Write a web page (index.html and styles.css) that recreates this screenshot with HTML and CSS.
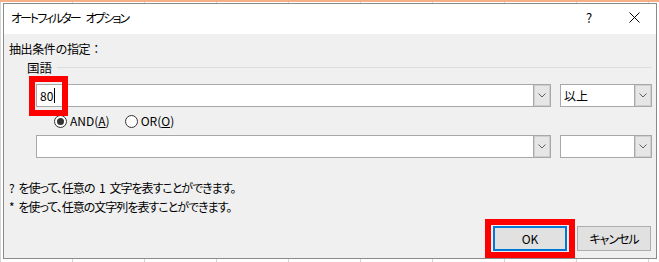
FILE: index.html
```html
<!DOCTYPE html>
<html lang="ja">
<head>
<meta charset="utf-8">
<link rel="stylesheet" href="styles.css">
</head>
<body>
<div class="sheet">
  <div class="dialog">
    <div class="titlebar">
      <span class="title">オートフィルター オプション</span>
      <span class="help">?</span>
      <span class="close"><svg width="11" height="11" viewBox="0 0 11 11"><path d="M0.5 0.5 L10.5 10.5 M10.5 0.5 L0.5 10.5" stroke="#000" stroke-width="1" fill="none"/></svg></span>
    </div>
    <div class="body">
      <div class="criteria">抽出条件の指定：</div>
      <div class="group">
        <div class="legend"><span class="legend-text">国語</span><span class="rule"></span></div>
        <div class="row">
          <div class="combo combo-value">
            <span class="text">80</span><span class="caret"></span>
            <span class="dd"><svg width="8" height="5" viewBox="0 0 8 5"><path d="M0.5 0.5 L4 4 L7.5 0.5" stroke="#606060" fill="none"/></svg></span>
            <span class="mark mark-input"></span>
          </div>
          <div class="combo combo-op">
            <span class="text">以上</span>
            <span class="dd"><svg width="8" height="5" viewBox="0 0 8 5"><path d="M0.5 0.5 L4 4 L7.5 0.5" stroke="#606060" fill="none"/></svg></span>
          </div>
        </div>
        <div class="radios">
          <label class="radio"><span class="circle checked"></span><span>AND(<u>A</u>)</span></label>
          <label class="radio"><span class="circle"></span><span>OR(<u>O</u>)</span></label>
        </div>
        <div class="row row2">
          <div class="combo combo-value">
            <span class="text"></span>
            <span class="dd"><svg width="8" height="5" viewBox="0 0 8 5"><path d="M0.5 0.5 L4 4 L7.5 0.5" stroke="#606060" fill="none"/></svg></span>
          </div>
          <div class="combo combo-op">
            <span class="text"></span>
            <span class="dd"><svg width="8" height="5" viewBox="0 0 8 5"><path d="M0.5 0.5 L4 4 L7.5 0.5" stroke="#606060" fill="none"/></svg></span>
          </div>
        </div>
      </div>
      <div class="hint hint1">? を使って、任意の 1 文字を表すことができます。</div>
      <div class="hint">* を使って、任意の文字列を表すことができます。</div>
      <div class="buttons">
        <div class="btn btn-ok">OK<span class="mark mark-ok"></span></div>
        <div class="btn btn-cancel">キャンセル</div>
      </div>
    </div>
  </div>
</div>
</body>
</html>
```

FILE: styles.css
```css
html, body {
  margin: 0;
  padding: 0;
}
body {
  width: 659px;
  height: 262px;
  overflow: hidden;
  font-family: "Noto Sans CJK JP", sans-serif;
  font-size: 12px;
  color: #000;
}
.sheet {
  width: 659px;
  height: 262px;
  box-sizing: border-box;
  padding: 3px 2px 3px 3px;
  background:
    linear-gradient(to bottom, #f4b084 0, #f4b084 2px, transparent 2px),
    repeating-linear-gradient(to right, #d4d4d4 0, #d4d4d4 1px, #ffffff 1px, #ffffff 72px),
    #fff;
}
.dialog {
  width: 654px;
  height: 256px;
  box-sizing: border-box;
  border: 1px solid #8a8a8a;
  background: #f0f0f0;
  display: flex;
  flex-direction: column;
}
.titlebar {
  height: 30px;
  flex: none;
  background: #fff;
  display: flex;
  align-items: center;
  padding-left: 7px;
}
.title {
  flex: 1;
  font-feature-settings: "palt";
  font-size: 12px;
  letter-spacing: -2px;
  word-spacing: 5px;
  margin-top: -3px;
}
.help {
  width: 14px;
  font-size: 13px;
  margin-top: -3px;
  margin-right: 29px;
}
.close {
  width: 11px;
  height: 11px;
  margin-right: 16px;
  margin-top: -3px;
  display: flex;
}
.body {
  flex: 1;
  padding: 7px 4px 0 5px;
}
.criteria {
  line-height: 16px;
  font-size: 12px;
  letter-spacing: -0.4px;
}
.group {
  padding-left: 18px;
}
.legend {
  margin-top: 3px;
  display: flex;
  align-items: center;
  line-height: 16px;
}
.legend-text {
  font-size: 12.5px;
}
.rule {
  flex: 1;
  height: 1px;
  background: #dcdcdc;
  margin-left: 5px;
  margin-top: -2px;
}
.row {
  margin-top: 8px;
  padding-left: 9px;
  display: flex;
  gap: 9px;
}
.row2 {
  margin-top: 6px;
}
.combo {
  position: relative;
  height: 23px;
  box-sizing: border-box;
  border: 1px solid #a8a8a8;
  background: #fff;
  display: flex;
  align-items: center;
}
.combo-value {
  width: 515px;
}
.combo-op {
  width: 92px;
}
.combo .text {
  flex: 1;
  padding-left: 3px;
  font-size: 12px;
  line-height: 16px;
}
.combo-value .text {
  flex: none;
}
.combo-value .text:empty,
.combo-op .text:empty {
  flex: 1;
}
.caret {
  width: 1px;
  height: 15px;
  background: #000;
  margin-left: 1px;
  margin-right: auto;
}
.dd {
  width: 17px;
  height: 21px;
  box-sizing: border-box;
  border-left: 1px solid #a8a8a8;
  background: #e6e6e6;
  box-shadow: inset 0 0 0 1px #cfcfcf;
  display: flex;
  align-items: center;
  justify-content: center;
}
.mark {
  position: absolute;
  box-sizing: border-box;
  border: 6px solid #ff0000;
}
.mark-input {
  left: -8px;
  top: -9px;
  width: 39px;
  height: 40px;
}
.radios {
  margin-top: 6px;
  padding-left: 27px;
  display: flex;
  line-height: 16px;
  font-size: 12px;
}
.radio {
  display: flex;
  align-items: center;
  margin-right: 15px;
}
.circle {
  width: 13px;
  height: 13px;
  box-sizing: border-box;
  border: 1px solid #333;
  border-radius: 50%;
  background: #fff;
  margin-right: 3px;
  display: flex;
  align-items: center;
  justify-content: center;
}
.circle.checked::after {
  content: "";
  width: 7px;
  height: 7px;
  border-radius: 50%;
  background: #333;
}
.hint {
  line-height: 16px;
  margin-top: 3px;
  font-size: 12px;
  font-feature-settings: "palt";
  letter-spacing: -1px;
  word-spacing: 3px;
}
.hint1 {
  margin-top: 22px;
}
.buttons {
  margin-top: 11px;
  margin-right: 1px;
  display: flex;
  justify-content: flex-end;
  gap: 10px;
}
.btn {
  position: relative;
  width: 74px;
  height: 25px;
  box-sizing: border-box;
  border: 1px solid #adadad;
  background: #e1e1e1;
  display: flex;
  align-items: center;
  justify-content: center;
  font-size: 12px;
}
.btn-cancel {
  font-feature-settings: "palt";
  letter-spacing: -1px;
}
.btn-ok {
  border: 2px solid #0078d7;
}
.mark-ok {
  left: -10px;
  top: -9px;
  width: 90px;
  height: 39px;
}
```
